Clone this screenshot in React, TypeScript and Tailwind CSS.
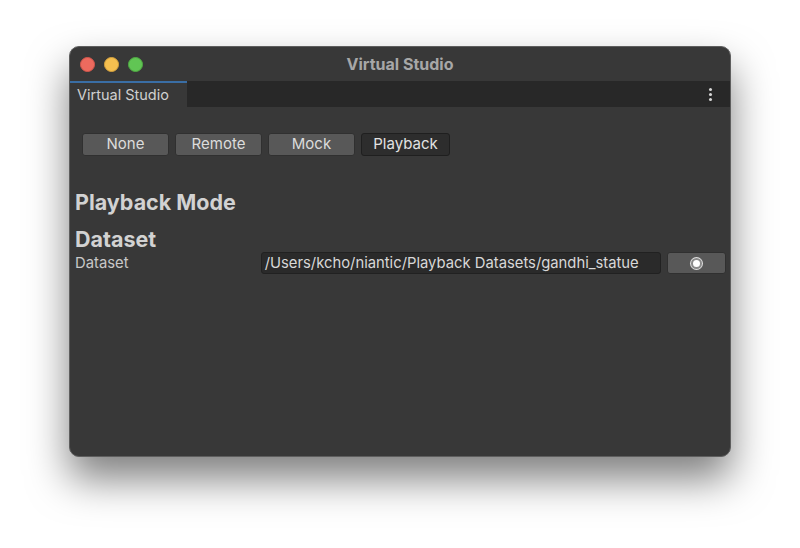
import React from "react";

const font = { fontFamily: "Inter, 'Noto Sans', sans-serif" };

export default function App() {
  const modes = ["None", "Remote", "Mock", "Playback"];
  return (
    <div className="w-[800px] h-[548px] bg-white pt-[46px] pl-[69px] overflow-hidden" style={font}>
      <div className="w-[662px] h-[411px] rounded-[10px] border border-[#5e5e5e] bg-[#383838] shadow-[0_22px_40px_rgba(0,0,0,0.5)] flex flex-col overflow-hidden">
        {/* title bar */}
        <div className="relative h-[34px] flex items-center px-[10px] gap-[9px] shrink-0">
          <span className="w-[15px] h-[15px] rounded-full bg-[#ed6a5e] border border-[#d5574c]" />
          <span className="w-[15px] h-[15px] rounded-full bg-[#f5bf4f] border border-[#d7a33d]" />
          <span className="w-[15px] h-[15px] rounded-full bg-[#61c554] border border-[#4fab43]" />
          <div className="absolute inset-0 flex items-center justify-center pointer-events-none">
            <span className="text-[16px] font-bold text-[#a7a7a7]">Virtual Studio</span>
          </div>
        </div>
        {/* tab bar */}
        <div className="h-[26px] bg-[#282828] flex items-stretch justify-between shrink-0">
          <div className="w-[117px] bg-[#383838] border-t-2 border-[#3a6ea5] flex items-center pl-[7px] text-[14.5px] text-[#d0d0d0]">
            Virtual Studio
          </div>
          <div className="flex flex-col items-center justify-center gap-[2px] pr-[18px]">
            <span className="w-[3px] h-[3px] rounded-full bg-[#d8d8d8]" />
            <span className="w-[3px] h-[3px] rounded-full bg-[#d8d8d8]" />
            <span className="w-[3px] h-[3px] rounded-full bg-[#d8d8d8]" />
          </div>
        </div>
        {/* content */}
        <div className="flex flex-col pl-[5px] pr-[4px]">
          <div className="flex gap-[6px] pl-[7px] mt-[26px]">
            {modes.map((m) => {
              const active = m === "Playback";
              return (
                <div
                  key={m}
                  className={
                    active
                      ? "w-[89px] h-[23px] rounded-[3px] bg-[#2d2d2d] border border-[#1f1f1f] flex items-center justify-center text-[15px] text-[#e2e2e2]"
                      : "w-[87px] h-[23px] rounded-[3px] bg-[#585858] border border-[#303030] flex items-center justify-center text-[15px] text-[#dcdcdc]"
                  }
                >
                  {m}
                </div>
              );
            })}
          </div>
          <div className="mt-[33px] text-[21.5px] font-bold text-[#d2d2d2] leading-[26px]">Playback Mode</div>
          <div className="mt-[11px] text-[21.5px] font-bold text-[#d2d2d2] leading-[26px]">Dataset</div>
          <div className="flex items-center h-[22px] mt-[0px]">
            <div className="w-[186px] text-[14.8px] text-[#c8c8c8]">Dataset</div>
            <div className="w-[401px] h-[22px] rounded-[3px] bg-[#2a2a2a] border border-[#212121] flex items-center pl-[3px] text-[14.8px] text-[#d8d8d8] whitespace-nowrap overflow-hidden">
              /Users/kcho/niantic/Playback Datasets/gandhi_statue
            </div>
            <div className="ml-[6px] w-[59px] h-[22px] rounded-[3px] bg-[#585858] border border-[#303030] flex items-center justify-center">
              <span className="w-[11px] h-[11px] rounded-full bg-white border-[2px] border-[#8a8a8a] ring-1 ring-[#e0e0e0]" />
            </div>
          </div>
        </div>
      </div>
    </div>
  );
}
